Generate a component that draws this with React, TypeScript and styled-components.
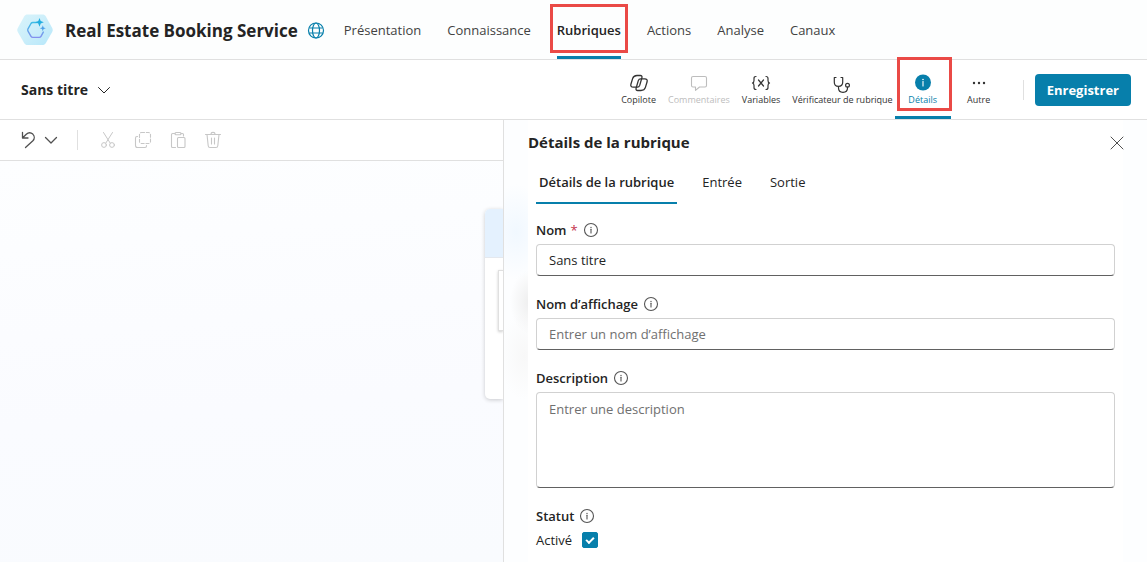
import React, { useState } from "react";
import styled, { createGlobalStyle, css } from "styled-components";

const accent = "#077fab";
const line = "#e0e0e0";
const ink = "#242424";
const highlight = "#ea4a46";

const GlobalStyle = createGlobalStyle`
  *, *::before, *::after { box-sizing: border-box; }
  html, body, #root { height: 100%; }
  body {
    margin: 0;
    background: #fdfefe;
    color: ${ink};
    font: 13px/20px "Open Sans", "Noto Sans", sans-serif;
  }
  button, input, textarea { font: inherit; color: inherit; }
  button { border: 0; padding: 0; background: none; cursor: pointer; }
  button:disabled { cursor: default; }
  svg { display: block; flex: none; }
`;

const Page = styled.div`
  display: flex;
  flex-direction: column;
  min-height: 100vh;
`;

const Header = styled.header`
  display: flex;
  align-items: center;
  height: 60px;
  padding: 0 16px;
  border-bottom: 1px solid ${line};
`;

const AgentName = styled.h1`
  margin: 2px 9px 0 11px;
  font-size: 17px;
  line-height: 24px;
  font-weight: 700;
  white-space: nowrap;
`;

const Nav = styled.nav`
  display: flex;
  align-self: stretch;
  gap: 26px;
  margin-left: 19px;
`;

const NavLink = styled.a<{ $active?: boolean }>`
  position: relative;
  display: flex;
  align-items: center;
  color: #424242;
  text-decoration: none;
  ${(p) =>
    p.$active &&
    css`
      color: ${ink};
      font-weight: 600;
      box-shadow: inset 0 -3px ${accent};
    `}
`;

const NavMark = styled.span`
  position: absolute;
  inset: 4px -7px 6px -7px;
  border: 3px solid ${highlight};
`;

const TopicBar = styled.div`
  display: flex;
  align-items: center;
  justify-content: space-between;
  height: 60px;
  padding: 0 16px 0 21px;
  border-bottom: 1px solid ${line};
  background: #fff;
`;

const TopicButton = styled.button`
  display: flex;
  align-items: center;
  gap: 9px;
  font-size: 14px;
  font-weight: 700;
`;

const Commands = styled.div`
  display: flex;
  align-items: center;
  align-self: stretch;
  gap: 2px;
`;

const CommandGroup = styled.div<{ $gap: number }>`
  display: flex;
  align-self: stretch;
  gap: ${(p) => p.$gap}px;
`;

const Command = styled.button<{ $active?: boolean; $wide?: boolean }>`
  position: relative;
  display: flex;
  flex-direction: column;
  align-items: center;
  justify-content: center;
  padding-top: 1px;
  min-width: ${(p) => (p.$wide ? "56px" : "0")};
  font-size: 9px;
  line-height: 14px;
  white-space: nowrap;
  color: #333;
  ${(p) =>
    p.$active &&
    css`
      color: ${accent};
      box-shadow: inset 0 -3px ${accent};
    `}
  &:disabled {
    color: #bdbdbd;
  }
`;

const CommandMark = styled.span`
  position: absolute;
  inset: -3px -1px 8px 2px;
  border: 3px solid ${highlight};
`;

const Separator = styled.span<{ $space: string }>`
  width: 1px;
  height: 20px;
  margin: ${(p) => p.$space};
  background: ${line};
`;

const SaveButton = styled.button`
  height: 32px;
  padding: 0 12px;
  border-radius: 4px;
  background: ${accent};
  color: #fff;
  font-weight: 700;
`;

const Workspace = styled.main`
  flex: 1;
  display: grid;
  grid-template-columns: 503fr 644fr;
`;

const CanvasPane = styled.section`
  display: flex;
  flex-direction: column;
  overflow: hidden;
`;

const EditBar = styled.div`
  display: flex;
  align-items: center;
  height: 41px;
  padding: 0 18px;
  border-bottom: 1px solid ${line};
  background: #fff;
`;

const UndoGroup = styled.div`
  display: flex;
  align-items: center;
  gap: 6px;
`;

const EditTools = styled.div`
  display: flex;
  gap: 15px;
`;

const IconButton = styled.button`
  display: flex;
  color: #505050;
  &:disabled {
    color: #c7c7c7;
  }
`;

const Canvas = styled.div`
  flex: 1;
  display: flex;
  justify-content: flex-end;
  align-items: flex-start;
  padding-top: 48px;
  background: linear-gradient(175deg, #fdfeff, #fafbff 60%, #f9fbfe);
`;

const NodeCard = styled.div`
  width: 18px;
  height: 190px;
  border-radius: 5px 0 0 5px;
  background: #fff;
  box-shadow: 0 1px 4px rgba(0, 0, 0, 0.2);
`;

const NodeHead = styled.div`
  height: 49px;
  border-bottom: 1px solid #e4e8ee;
  border-radius: 5px 0 0 0;
  background: #e4f1fe;
`;

const NodeBody = styled.div`
  height: 61px;
  margin: 12px 0 0 13px;
  border: 1px solid #e0e0e0;
  border-right: 0;
  background: #fff;
  box-shadow: 0 1px 3px rgba(0, 0, 0, 0.2);
`;

const Panel = styled.aside`
  border-left: 1px solid ${line};
  padding-bottom: 12px;
  background:
    linear-gradient(#fff, #fff) 24px 0 / calc(100% - 48px) 100% no-repeat,
    radial-gradient(ellipse 32px 48px at 12px 112px, #f1f8ff, #f1f8ff00),
    radial-gradient(ellipse 20px 32px at 26px 182px, #eeeeee, #eeeeee00),
    radial-gradient(ellipse 24px 44px at 20px 236px, #f8f8f8, #f8f8f800),
    #fdfeff;
`;

const PanelHead = styled.div`
  display: flex;
  justify-content: space-between;
  align-items: center;
  height: 42px;
  padding: 2px 22px 0 24px;
`;

const PanelTitle = styled.h2`
  margin: 0;
  font-size: 15px;
  line-height: 22px;
  font-weight: 700;
`;

const Tabs = styled.div`
  display: flex;
  gap: 22px;
  padding: 0 32px;
`;

const Tab = styled.button<{ $active?: boolean }>`
  height: 42px;
  padding: 0 3px 2px;
  ${(p) =>
    p.$active &&
    css`
      font-weight: 600;
      box-shadow: inset 0 -2px ${accent};
    `}
`;

const Form = styled.form`
  display: flex;
  flex-direction: column;
  gap: 18px;
  padding: 16px 32px 0;
`;

const Field = styled.div`
  display: flex;
  flex-direction: column;
  gap: 4px;
`;

const LabelRow = styled.div`
  display: flex;
  align-items: center;
  gap: 5px;
  font-weight: 600;
`;

const Required = styled.span`
  margin-left: 4px;
  color: #c4314b;
  font-weight: 400;
`;

const boxStyle = css`
  width: 100%;
  border: 1px solid #d1d1d1;
  border-bottom-color: #616161;
  border-radius: 4px;
  background: #fff;
  outline: none;
  &::placeholder {
    color: #707070;
    opacity: 1;
  }
`;

const TextInput = styled.input`
  ${boxStyle}
  height: 32px;
  padding: 0 12px;
`;

const TextArea = styled.textarea`
  ${boxStyle}
  height: 96px;
  padding: 6px 12px;
  resize: none;
`;

const CheckLabel = styled.label`
  display: flex;
  align-items: center;
  gap: 10px;
`;

const Checkbox = styled.input`
  appearance: none;
  width: 16px;
  height: 16px;
  margin: 0;
  border: 1px solid #616161;
  border-radius: 2px;
  display: grid;
  place-items: center;
  &:checked {
    border-color: ${accent};
    background: ${accent};
  }
  &:checked::after {
    content: "";
    width: 8px;
    height: 5px;
    border: solid #fff;
    border-width: 0 0 2px 2px;
    transform: translateY(-1px) rotate(-45deg);
  }
`;

const Svg = ({ size = 20, children, w = 1 }: { size?: number; w?: number; children: React.ReactNode }) => (
  <svg
    width={size}
    height={size}
    viewBox={`0 0 ${size} ${size}`}
    fill="none"
    stroke="currentColor"
    strokeWidth={w}
    strokeLinecap="round"
    strokeLinejoin="round"
    aria-hidden="true"
  >
    {children}
  </svg>
);

const AgentLogo = () => (
  <svg width="38" height="34" viewBox="0 0 38 34" aria-hidden="true">
    <defs>
      <linearGradient id="tile" x1="0" y1="0" x2="1" y2="1">
        <stop offset="0" stopColor="#d9f4fb" />
        <stop offset="0.5" stopColor="#cbeefa" />
        <stop offset="1" stopColor="#b5e7fa" />
      </linearGradient>
      <linearGradient id="ring" x1="0" y1="0" x2="0" y2="1">
        <stop offset="0" stopColor="#3fbde6" />
        <stop offset="1" stopColor="#8491ee" />
      </linearGradient>
    </defs>
    <path
      d="M11.500 1.500h15c1.400 0 2.500.6 3.200 1.800l6.500 11.700c.7 1.300.7 2.700 0 4l-6.500 11.200c-.7 1.200-1.800 1.800-3.200 1.800h-15c-1.400 0-2.500-.6-3.200-1.800L1.800 19c-.7-1.300-.7-2.700 0-4L8.300 3.300c.7-1.200 1.800-1.800 3.200-1.800z"
      fill="url(#tile)"
    />
    <path
      d="M20.500 9.500h-3.700c-.8 0-1.400.4-1.800 1l-3 5.300c-.4.8-.4 1.600 0 2.300l3 5.200c.4.700 1 1.100 1.800 1.100h6.400c.8 0 1.400-.4 1.800-1.100l2.300-4.200"
      fill="none"
      stroke="url(#ring)"
      strokeWidth="1.400"
      strokeLinecap="round"
    />
    <path d="M23.500 5l1.200 3.100 3.100 1.200-3.100 1.200-1.200 3.200-1.200-3.200-3.100-1.200 3.100-1.200z" fill="#23aee0" />
    <path d="M26.800 12.200l.8 2.200 2.200.8-2.200.8-.8 2.200-.8-2.200-2.200-.8 2.200-.8z" fill="#4b9fe8" />
  </svg>
);

const GlobeIcon = () => (
  <svg width="18" height="18" viewBox="0 0 18 18" fill="none" stroke={accent} strokeWidth="1.200" aria-hidden="true">
    <circle cx="9" cy="9.500" r="7.500" />
    <ellipse cx="9" cy="9.500" rx="3.500" ry="7.500" />
    <path d="M2.200 7h13.600M2.200 12h13.600" />
  </svg>
);

const ChevronIcon = ({ w = 1 }: { w?: number }) => (
  <Svg size={14} w={w}>
    <path d="M1.500 4.500L7 10l5.500-5.500" />
  </Svg>
);

const copilotHalf =
  "M8 2.500h3.300c1.400 0 2 1 1.600 2.300l-2.200 7.600c-.4 1.200-1.100 1.800-2.300 1.800H4.200c-1.900 0-2.800-1.200-2.300-3L3.600 5.600c.6-2 2.100-3.100 4.400-3.100z";

const CopilotIcon = () => (
  <Svg w={1.3}>
    <path d={copilotHalf} />
    <path d={copilotHalf} transform="rotate(180 10 10)" />
  </Svg>
);

const CommentIcon = () => (
  <Svg w={1.1}>
    <path d="M4 3.500h12c.9 0 1.500.6 1.500 1.500v7.500c0 .9-.6 1.500-1.500 1.500h-5.500L6.500 17.300V14H4c-.9 0-1.500-.6-1.500-1.500V5c0-.9.600-1.500 1.500-1.500z" />
  </Svg>
);

const VariableIcon = () => (
  <Svg w={1.2}>
    <path d="M5 3.500c-1.500 0-2 .7-2 2v2c0 1.400-.5 2.200-1.500 2.500C2.500 10.300 3 11 3 12.500v2c0 1.300.5 2 2 2M15 3.500c1.500 0 2 .7 2 2v2c0 1.400.5 2.200 1.500 2.500-1 .3-1.500 1-1.500 2.500v2c0 1.300-.5 2-2 2M7.500 7l5 6M12.500 7l-5 6" />
  </Svg>
);

const StethoscopeIcon = () => (
  <Svg w={1.2}>
    <path d="M4 4.500H2.300v4.700c0 2.500 1.700 4.200 4.200 4.200s4.200-1.700 4.200-4.200V4.500H9M6.500 13.400v1.600c0 2.500 1.700 4.300 4.500 4.300s4.500-1.800 4.500-4.300v-.8" />
    <circle cx="15.500" cy="12.300" r="1.900" />
  </Svg>
);

const DetailsIcon = () => (
  <svg width="20" height="20" viewBox="0 0 20 20" aria-hidden="true">
    <circle cx="10" cy="9.500" r="8" fill={accent} />
    <circle cx="10" cy="6.500" r="0.800" fill="#fff" />
    <path d="M10 8.500v4.500" stroke="#fff" strokeWidth="1.100" strokeLinecap="round" />
  </svg>
);

const MoreIcon = () => (
  <svg width="20" height="20" viewBox="0 0 20 20" fill="#333" aria-hidden="true">
    <circle cx="5" cy="10" r="1.200" />
    <circle cx="10" cy="10" r="1.200" />
    <circle cx="15" cy="10" r="1.200" />
  </svg>
);

const UndoIcon = () => (
  <Svg w={1.3}>
    <path d="M4.500 2.500v5.500h5.500M4.700 7.800l3.600-3.500c1.900-1.800 4.600-1.900 6.500-.2 1.900 1.900 1.900 4.700.1 6.600L7.500 17.500" />
  </Svg>
);

const CutIcon = () => (
  <Svg>
    <path d="M5.500 2.500l6.700 10.600M14.500 2.500L7.800 13.100" />
    <circle cx="6" cy="15" r="2.400" />
    <circle cx="14" cy="15" r="2.400" />
  </Svg>
);

const CopyIcon = () => (
  <Svg w={1.1}>
    <path d="M4.500 6.500H4c-.9 0-1.500.6-1.500 1.500v7.500c0 1.100.9 2 2 2H12c.9 0 1.500-.6 1.500-1.500v-.5" />
    <rect x="6.500" y="2.500" width="11" height="11" rx="2" strokeDasharray="3 1.800" />
  </Svg>
);

const PasteIcon = () => (
  <Svg w={1.1}>
    <path d="M7 3.500H4.500c-.6 0-1 .4-1 1v12c0 .6.400 1 1 1h3M13 3.500h1.500c.6 0 1 .4 1 1V6" />
    <rect x="7" y="2.500" width="6" height="2.200" rx="1" />
    <rect x="9.500" y="7.500" width="7.500" height="10" rx="1" />
  </Svg>
);

const TrashIcon = () => (
  <Svg w={1.1}>
    <path d="M2.500 4.500h15M8 4.300c0-1.200.8-1.900 2-1.900s2 .7 2 1.900M4 4.500l1.200 11.300c.1 1 .8 1.700 1.800 1.700h6c1 0 1.700-.7 1.800-1.700L16 4.500M8.500 8v6M11.500 8v6" />
  </Svg>
);

const CloseIcon = () => (
  <Svg size={16}>
    <path d="M2 3l12 12M14 3L2 15" />
  </Svg>
);

const InfoIcon = () => (
  <svg width="16" height="16" viewBox="0 0 16 16" fill="none" stroke="#555" strokeWidth="1.100" aria-hidden="true">
    <circle cx="8" cy="8" r="6.500" />
    <circle cx="8" cy="5.500" r="0.700" fill="#555" stroke="none" />
    <path d="M8 7.300v3.700" strokeLinecap="round" />
  </svg>
);

const navItems = ["Présentation", "Connaissance", "Rubriques", "Actions", "Analyse", "Canaux"];
const tabItems = ["Détails de la rubrique", "Entrée", "Sortie"];

export default function App() {
  const [name, setName] = useState("Sans titre");
  const [displayName, setDisplayName] = useState("");
  const [description, setDescription] = useState("");
  const [enabled, setEnabled] = useState(true);
  const [tab, setTab] = useState(tabItems[0]);

  return (
    <Page>
      <GlobalStyle />
      <Header>
        <AgentLogo />
        <AgentName>Real Estate Booking Service</AgentName>
        <GlobeIcon />
        <Nav>
          {navItems.map((item) => (
            <NavLink key={item} href="#" $active={item === "Rubriques"}>
              {item}
              {item === "Rubriques" && <NavMark />}
            </NavLink>
          ))}
        </Nav>
      </Header>

      <TopicBar>
        <TopicButton>
          Sans titre
          <ChevronIcon />
        </TopicButton>
        <Commands>
          <CommandGroup $gap={12}>
            <Command><CopilotIcon />Copilote</Command>
            <Command disabled><CommentIcon />Commentaires</Command>
            <Command><VariableIcon />Variables</Command>
            <Command><StethoscopeIcon />Vérificateur de rubrique</Command>
          </CommandGroup>
          <CommandGroup $gap={0}>
            <Command $wide $active><DetailsIcon />Détails<CommandMark /></Command>
            <Command $wide><MoreIcon />Autre</Command>
          </CommandGroup>
          <Separator $space="0 9px 0 14px" />
          <SaveButton>Enregistrer</SaveButton>
        </Commands>
      </TopicBar>

      <Workspace>
        <CanvasPane>
          <EditBar>
            <UndoGroup>
              <IconButton aria-label="Annuler"><UndoIcon /></IconButton>
              <IconButton aria-label="Historique"><ChevronIcon w={1.3} /></IconButton>
            </UndoGroup>
            <Separator $space="0 20px 0 19px" />
            <EditTools>
              <IconButton disabled aria-label="Couper"><CutIcon /></IconButton>
              <IconButton disabled aria-label="Copier"><CopyIcon /></IconButton>
              <IconButton disabled aria-label="Coller"><PasteIcon /></IconButton>
              <IconButton disabled aria-label="Supprimer"><TrashIcon /></IconButton>
            </EditTools>
          </EditBar>
          <Canvas>
            <NodeCard>
              <NodeHead />
              <NodeBody />
            </NodeCard>
          </Canvas>
        </CanvasPane>

        <Panel>
          <PanelHead>
            <PanelTitle>Détails de la rubrique</PanelTitle>
            <IconButton aria-label="Fermer"><CloseIcon /></IconButton>
          </PanelHead>
          <Tabs role="tablist">
            {tabItems.map((item) => (
              <Tab key={item} role="tab" aria-selected={item === tab} $active={item === tab} onClick={() => setTab(item)}>
                {item}
              </Tab>
            ))}
          </Tabs>
          <Form onSubmit={(e) => e.preventDefault()}>
            <Field>
              <LabelRow>
                <label htmlFor="name">Nom<Required>*</Required></label>
                <InfoIcon />
              </LabelRow>
              <TextInput id="name" value={name} onChange={(e) => setName(e.target.value)} />
            </Field>
            <Field>
              <LabelRow>
                <label htmlFor="display">Nom d’affichage</label>
                <InfoIcon />
              </LabelRow>
              <TextInput
                id="display"
                placeholder="Entrer un nom d’affichage"
                value={displayName}
                onChange={(e) => setDisplayName(e.target.value)}
              />
            </Field>
            <Field>
              <LabelRow>
                <label htmlFor="description">Description</label>
                <InfoIcon />
              </LabelRow>
              <TextArea
                id="description"
                placeholder="Entrer une description"
                value={description}
                onChange={(e) => setDescription(e.target.value)}
              />
            </Field>
            <Field>
              <LabelRow>
                <span>Statut</span>
                <InfoIcon />
              </LabelRow>
              <CheckLabel>
                Activé
                <Checkbox type="checkbox" checked={enabled} onChange={(e) => setEnabled(e.target.checked)} />
              </CheckLabel>
            </Field>
          </Form>
        </Panel>
      </Workspace>
    </Page>
  );
}
